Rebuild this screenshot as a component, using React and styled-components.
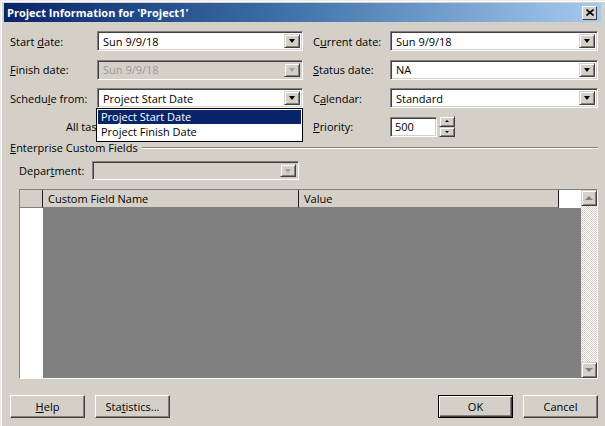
import React from 'react';
import styled, { createGlobalStyle } from 'styled-components';

const GlobalStyle = createGlobalStyle`
  html, body {
    margin: 0;
    padding: 0;
    background: #d4d0c8;
  }
  body {
    font-family: "Open Sans", "Liberation Sans", sans-serif;
    font-size: 11px;
    color: #000;
  }
`;

const face = '#d4d0c8';

const Window = styled.div`
  width: 605px;
  height: 426px;
  box-sizing: border-box;
  padding: 3px 4px 0 4px;
  background: ${face};
  box-shadow: inset 1px 1px 0 #ececec, inset 2px 2px 0 #fff;
  overflow: hidden;
  display: flex;
  flex-direction: column;
`;

const TitleBar = styled.div`
  height: 19px;
  display: flex;
  align-items: center;
  justify-content: space-between;
  padding: 0 4px 0 3px;
  background: linear-gradient(to right, #0a246a 0%, #3a6ea5 45%, #a6caf0 100%);
  color: #fff;
  font-weight: 700;
  font-size: 11px;
`;

const CloseBtn = styled.div`
  width: 13px;
  height: 12px;
  background: ${face};
  border: 1px solid;
  border-color: #fff #404040 #404040 #fff;
  display: flex;
  align-items: center;
  justify-content: center;
`;

const Body = styled.div`
  flex: 1;
  display: flex;
  flex-direction: column;
  padding: 9px 3px 0 6px;
`;

const Form = styled.div`
  display: grid;
  grid-template-columns: 87px 206px 87px 208px;
  grid-template-rows: repeat(4, 20px);
  row-gap: 8.5px;
  align-items: center;
`;

const Label = styled.div`
  padding-left: ${p => p.$indent || 0}px;
  white-space: nowrap;
`;

const Key = styled.span`
  text-decoration: underline;
  text-underline-offset: 1px;
`;

const ComboWrap = styled.div`
  position: relative;
  width: ${p => p.$w}px;
  height: ${p => p.$h || 20}px;
`;

const ComboBox = styled.div`
  box-sizing: border-box;
  width: 100%;
  height: 100%;
  background: ${p => (p.$disabled ? face : '#fff')};
  border: 1px solid;
  border-color: #808080 #fff #fff #808080;
  box-shadow: inset 1px 1px 0 #404040, inset -1px -1px 0 ${face};
  display: flex;
  align-items: center;
  padding: 2px 2px 2px 5px;
  color: ${p => (p.$disabled ? '#9a9a9a' : '#000')};
`;

const ComboText = styled.div`
  flex: 1;
  white-space: nowrap;
  overflow: hidden;
`;

const ArrowBtn = styled.div`
  box-sizing: border-box;
  width: 16px;
  height: 100%;
  max-height: 16px;
  background: ${face};
  border: 1px solid;
  border-color: ${face} #404040 #404040 ${face};
  box-shadow: inset 1px 1px 0 #fff, inset -1px -1px 0 #808080;
  display: flex;
  align-items: center;
  justify-content: center;
`;

const Tri = styled.div`
  width: 0;
  height: 0;
  border-left: ${p => p.$s || 4}px solid transparent;
  border-right: ${p => p.$s || 4}px solid transparent;
  ${p => (p.$up ? 'border-bottom' : 'border-top')}: ${p => p.$h || 4}px solid ${p => p.$c || '#000'};
`;

const DropList = styled.div`
  position: absolute;
  left: -1px;
  top: 20px;
  width: 207px;
  box-sizing: border-box;
  background: #fff;
  border: 1px solid #000;
  padding: 1px;
  z-index: 5;
`;

const DropItem = styled.div`
  height: 14px;
  line-height: 14px;
  padding-left: 3px;
  background: ${p => (p.$active ? '#0a246a' : '#fff')};
  color: ${p => (p.$active ? '#fff' : '#000')};
  margin-bottom: 1px;
  white-space: nowrap;
`;

// most of this label is hidden by the open drop-down list
const SpanLabel = styled.div`
  grid-column: 1 / 3;
  padding-left: 56px;
  white-space: nowrap;
`;

const PriorityRow = styled.div`
  display: flex;
  align-items: center;
  gap: 2px;
`;

const NumField = styled.div`
  box-sizing: border-box;
  width: 47px;
  height: 20px;
  background: #fff;
  border: 1px solid;
  border-color: #808080 #fff #fff #808080;
  box-shadow: inset 1px 1px 0 #404040, inset -1px -1px 0 ${face};
  padding: 2px 4px;
  display: flex;
  align-items: center;
`;

const Spinner = styled.div`
  display: flex;
  flex-direction: column;
  width: 16px;
  height: 21px;
`;

const SpinBtn = styled.div`
  flex: 1;
  box-sizing: border-box;
  background: ${face};
  border: 1px solid;
  border-color: ${face} #404040 #404040 ${face};
  box-shadow: inset 1px 1px 0 #fff, inset -1px -1px 0 #808080;
  display: flex;
  align-items: center;
  justify-content: center;
`;

const Section = styled.div`
  display: flex;
  align-items: center;
  margin-top: 5px;
  height: 12px;
`;

const Etched = styled.div`
  flex: 1;
  height: 0;
  margin-left: 4px;
  border-top: 1px solid #808080;
  border-bottom: 1px solid #fff;
`;

const DeptRow = styled.div`
  display: flex;
  align-items: center;
  margin-top: 7.5px;
  padding-left: 9px;
`;

const DeptLabel = styled.div`
  width: 73px;
`;

const Table = styled.div`
  margin: 9px 0 0 9px;
  width: 579px;
  height: 190px;
  box-sizing: border-box;
  border: 1px solid;
  border-color: #808080 #fff #fff #808080;
  display: flex;
`;

const TableMain = styled.div`
  flex: 1;
  display: flex;
  flex-direction: column;
`;

const HeadRow = styled.div`
  height: 18px;
  display: flex;
  background: ${face};
`;

const HeadCell = styled.div`
  box-sizing: border-box;
  width: ${p => p.$w}px;
  flex: ${p => (p.$grow ? 1 : 'none')};
  border-right: ${p => (p.$blank ? 'none' : '1px solid #202020')};
  border-bottom: ${p => (p.$blank ? 'none' : '1px solid #808080')};
  background: ${p => (p.$blank ? '#fff' : face)};
  padding-left: 5px;
  display: flex;
  align-items: center;
  white-space: nowrap;
`;

const TableBody = styled.div`
  flex: 1;
  display: flex;
`;

const RowHeads = styled.div`
  width: 23px;
  background: #fff;
`;

const Empty = styled.div`
  flex: 1;
  background: #808080;
`;

const ScrollBar = styled.div`
  width: 16px;
  display: flex;
  flex-direction: column;
  background-color: #fff;
  background-image: repeating-conic-gradient(${face} 0 25%, #fff 0 50%);
  background-size: 2px 2px;
`;

const ScrollBtn = styled.div`
  box-sizing: border-box;
  width: 16px;
  height: 16px;
  background: ${face};
  border: 1px solid;
  border-color: ${face} #404040 #404040 ${face};
  box-shadow: inset 1px 1px 0 #fff, inset -1px -1px 0 #808080;
  display: flex;
  align-items: center;
  justify-content: center;
`;

const Track = styled.div`
  flex: 1;
`;

const Footer = styled.div`
  display: flex;
  align-items: center;
  margin-top: 16px;
  gap: 10px;
`;

const Spacer = styled.div`
  flex: 1;
`;

const Button = styled.div`
  box-sizing: border-box;
  width: 75px;
  height: 23px;
  background: ${face};
  border: 1px solid;
  border-color: ${p => (p.$default ? '#000' : `#fff #404040 #404040 #fff`)};
  box-shadow: ${p =>
    p.$default
      ? 'inset 1px 1px 0 #fff, inset -1px -1px 0 #404040, inset -2px -2px 0 #808080'
      : 'inset -1px -1px 0 #808080'};
  display: flex;
  align-items: center;
  justify-content: center;
  padding-bottom: 1px;
`;

function Combo({ width, height, value, disabled, children }) {
  return (
    <ComboWrap $w={width} $h={height}>
      <ComboBox $disabled={disabled}>
        <ComboText>{value}</ComboText>
        <ArrowBtn>
          <Tri $s={3.5} $h={4} $c={disabled ? '#a0a0a0' : '#000'} />
        </ArrowBtn>
      </ComboBox>
      {children}
    </ComboWrap>
  );
}

export default function App() {
  return (
    <>
      <GlobalStyle />
      <Window>
        <TitleBar>
          <span>Project Information for 'Project1'</span>
          <CloseBtn>
            <svg width="8" height="7" viewBox="0 0 8 7">
              <path d="M0.5 0.5 L7.5 6.5 M7.5 0.5 L0.5 6.5" stroke="#000" strokeWidth="1.6" />
            </svg>
          </CloseBtn>
        </TitleBar>

        <Body>
          <Form>
            <Label>Start <Key>d</Key>ate:</Label>
            <Combo width={206} value="Sun 9/9/18" />
            <Label $indent={10}>C<Key>u</Key>rrent date:</Label>
            <Combo width={208} value="Sun 9/9/18" />

            <Label><Key>F</Key>inish date:</Label>
            <Combo width={206} value="Sun 9/9/18" disabled />
            <Label $indent={10}><Key>S</Key>tatus date:</Label>
            <Combo width={208} value="NA" />

            <Label>Schedu<Key>l</Key>e from:</Label>
            <Combo width={206} value="Project Start Date">
              <DropList>
                <DropItem $active>Project Start Date</DropItem>
                <DropItem>Project Finish Date</DropItem>
              </DropList>
            </Combo>
            <Label $indent={10}>C<Key>a</Key>lendar:</Label>
            <Combo width={208} value="Standard" />

            <SpanLabel>All tasks begin as soon as possible.</SpanLabel>
            <Label $indent={10}><Key>P</Key>riority:</Label>
            <PriorityRow>
              <NumField>500</NumField>
              <Spinner>
                <SpinBtn><Tri $up $s={2} $h={2} /></SpinBtn>
                <SpinBtn><Tri $s={2} $h={2} /></SpinBtn>
              </Spinner>
            </PriorityRow>
          </Form>

          <Section>
            <span><Key>E</Key>nterprise Custom Fields</span>
            <Etched />
          </Section>

          <DeptRow>
            <DeptLabel>Depar<Key>t</Key>ment:</DeptLabel>
            <Combo width={207} height={19} value="" disabled />
          </DeptRow>

          <Table>
            <TableMain>
              <HeadRow>
                <HeadCell $w={23} />
                <HeadCell $w={256}>Custom Field Name</HeadCell>
                <HeadCell $w={260}>Value</HeadCell>
                <HeadCell $grow $blank />
              </HeadRow>
              <TableBody>
                <RowHeads />
                <Empty />
              </TableBody>
            </TableMain>
            <ScrollBar>
              <ScrollBtn><Tri $up $s={4} $h={4} $c="#808080" /></ScrollBtn>
              <Track />
              <ScrollBtn><Tri $s={4} $h={4} $c="#808080" /></ScrollBtn>
            </ScrollBar>
          </Table>

          <Footer>
            <Button><span><Key>H</Key>elp</span></Button>
            <Button><span>Sta<Key>t</Key>istics...</span></Button>
            <Spacer />
            <Button $default>OK</Button>
            <Button>Cancel</Button>
          </Footer>
        </Body>
      </Window>
    </>
  );
}
